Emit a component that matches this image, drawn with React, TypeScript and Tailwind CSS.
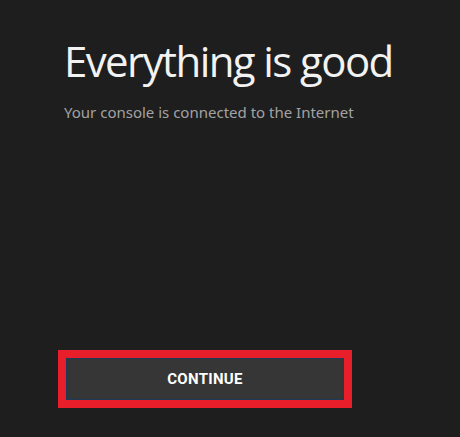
export default function App() {
  return (
    <div className="w-[460px] h-[437px] bg-[#1e1e1e] flex flex-col overflow-hidden">
      <div className="pl-[64px] pt-[36px]">
        <h1
          className="text-[42px] leading-[50px] text-[#f2f2f2] tracking-[-1.6px]"
          style={{ fontFamily: '"Open Sans", sans-serif' }}
        >
          Everything is good
        </h1>
        <p
          className="mt-[16px] text-[15px] leading-[20px] text-[#a3a3a3]"
          style={{ fontFamily: '"Noto Sans", sans-serif' }}
        >
          Your console is connected to the Internet
        </p>
      </div>
      <div className="mt-auto mb-[29px] ml-[58px] w-[294px] h-[58px] border-[8px] border-[#e81e2a] p-px bg-[#1b3a5a]">
        <div className="w-full h-full bg-[#363636] flex items-center justify-center">
          <span
            className="text-[15px] font-bold text-white tracking-[0.3px]"
            style={{ fontFamily: 'Roboto, sans-serif' }}
          >
            CONTINUE
          </span>
        </div>
      </div>
    </div>
  );
}
